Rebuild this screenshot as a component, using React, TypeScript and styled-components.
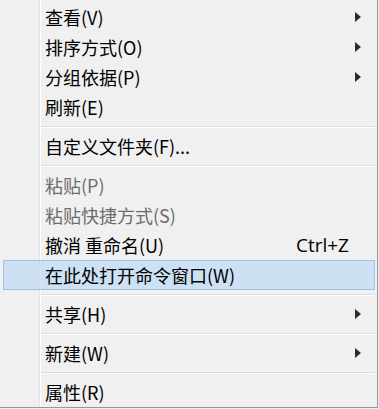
import React from "react";
import styled, { createGlobalStyle } from "styled-components";

const GlobalStyle = createGlobalStyle`
  html, body {
    margin: 0;
    padding: 0;
    background: #ececec;
  }
`;

type Entry =
  | { kind: "item"; label: string; shortcut?: string; submenu?: boolean; disabled?: boolean; active?: boolean }
  | { kind: "sep" };

const entries: Entry[] = [
  { kind: "item", label: "查看(V)", submenu: true },
  { kind: "item", label: "排序方式(O)", submenu: true },
  { kind: "item", label: "分组依据(P)", submenu: true },
  { kind: "item", label: "刷新(E)" },
  { kind: "sep" },
  { kind: "item", label: "自定义文件夹(F)..." },
  { kind: "sep" },
  { kind: "item", label: "粘贴(P)", disabled: true },
  { kind: "item", label: "粘贴快捷方式(S)", disabled: true },
  { kind: "item", label: "撤消 重命名(U)", shortcut: "Ctrl+Z" },
  { kind: "item", label: "在此处打开命令窗口(W)", active: true },
  { kind: "sep" },
  { kind: "item", label: "共享(H)", submenu: true },
  { kind: "sep" },
  { kind: "item", label: "新建(W)", submenu: true },
  { kind: "sep" },
  { kind: "item", label: "属性(R)" },
];

const Menu = styled.div`
  box-sizing: border-box;
  width: 378px;
  height: 408px;
  padding: 2px 2px 0 3px;
  display: flex;
  flex-direction: column;
  background:
    linear-gradient(
      to right,
      transparent 39px,
      #e2e3e3 39px,
      #e2e3e3 40px,
      #ffffff 40px,
      #ffffff 41px,
      transparent 41px
    ),
    #f0f0f0;
  border-right: 1px solid #979797;
  border-bottom: 1px solid #979797;
  font-family: "Microsoft YaHei", "Noto Sans CJK SC", "Segoe UI", sans-serif;
  font-size: 18px;
  color: #000;
`;

const Item = styled.div<{ $disabled?: boolean; $active?: boolean }>`
  box-sizing: border-box;
  height: 30px;
  display: grid;
  grid-template-columns: 41px 1fr auto 25px;
  align-items: center;
  color: ${(p) => (p.$disabled ? "#6d6d6d" : "#000")};
  border: 1px solid ${(p) => (p.$active ? "#94c3ec" : "transparent")};
  background: ${(p) => (p.$active ? "rgba(190, 218, 244, 0.7)" : "transparent")};
  white-space: nowrap;
`;

const Label = styled.span`
  grid-column: 2;
  line-height: 1;
`;

const Shortcut = styled.span`
  grid-column: 3;
  font-family: "Segoe UI", "Open Sans", "Noto Sans", sans-serif;
  font-size: 19px;
  line-height: 1;
`;

const ArrowCell = styled.span`
  grid-column: 4;
  display: flex;
  align-items: center;
  padding-left: 6px;
`;

const Separator = styled.div`
  height: 9px;
  display: flex;
  align-items: center;
  padding-left: 38px;

  &::after {
    content: "";
    flex: 1;
    height: 1px;
    background: #dcdcdc;
    box-shadow: 0 1px 0 #ffffff;
  }
`;

const Arrow = () => (
  <svg width="6" height="10" viewBox="0 0 6 10">
    <path d="M0 0 L6 5 L0 10 Z" fill="#2b2b2b" />
  </svg>
);

const App: React.FC = () => (
  <>
    <GlobalStyle />
    <Menu>
      {entries.map((e, i) =>
        e.kind === "sep" ? (
          <Separator key={i} />
        ) : (
          <Item key={i} $disabled={e.disabled} $active={e.active}>
            <Label>{e.label}</Label>
            {e.shortcut && <Shortcut>{e.shortcut}</Shortcut>}
            {e.submenu && (
              <ArrowCell>
                <Arrow />
              </ArrowCell>
            )}
          </Item>
        )
      )}
    </Menu>
  </>
);

export default App;
